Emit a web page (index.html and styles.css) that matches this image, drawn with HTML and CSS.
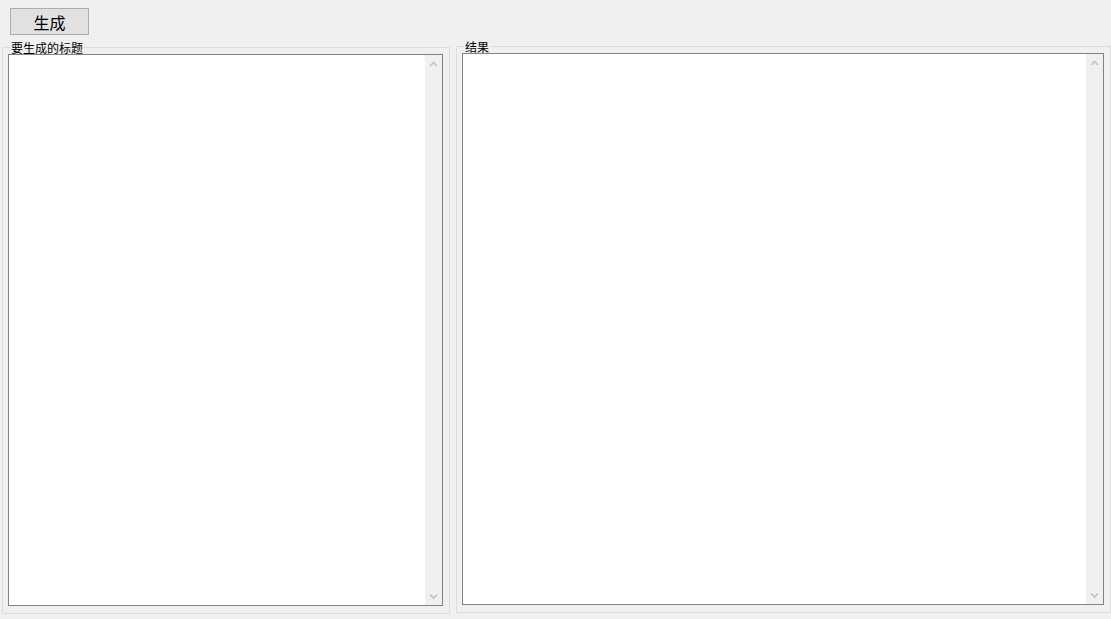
FILE: index.html
```html
<!DOCTYPE html>
<html lang="zh-CN">

<head>
    <meta charset="UTF-8">
    <title>生成</title>
    <link rel="stylesheet" href="styles.css">
</head>

<body>
    <div class="toolbar">
        <button class="btn">生成</button>
    </div>
    <div class="panels">
        <div class="group group-left">
            <span class="group-title">要生成的标题</span>
            <div class="text-box">
                <textarea class="text-input"></textarea>
                <div class="scrollbar">
                    <svg class="arrow" width="17" height="17" viewBox="0 0 17 17"><path d="M5 11 L8.5 7.5 L12 11" fill="none" stroke="#c2c2c2" stroke-width="1.6"/></svg>
                    <svg class="arrow" width="17" height="17" viewBox="0 0 17 17"><path d="M5 6.5 L8.5 10 L12 6.5" fill="none" stroke="#c2c2c2" stroke-width="1.6"/></svg>
                </div>
            </div>
        </div>
        <div class="group group-right">
            <span class="group-title">结果</span>
            <div class="text-box">
                <textarea class="text-input" readonly></textarea>
                <div class="scrollbar">
                    <svg class="arrow" width="17" height="17" viewBox="0 0 17 17"><path d="M5 11 L8.5 7.5 L12 11" fill="none" stroke="#c2c2c2" stroke-width="1.6"/></svg>
                    <svg class="arrow" width="17" height="17" viewBox="0 0 17 17"><path d="M5 6.5 L8.5 10 L12 6.5" fill="none" stroke="#c2c2c2" stroke-width="1.6"/></svg>
                </div>
            </div>
        </div>
    </div>
</body>

</html>
```

FILE: styles.css
```css
body {
    font-family: "Noto Sans CJK SC", "Noto Sans", sans-serif;
    margin: 0;
    padding: 0;
    width: 1111px;
    height: 619px;
    overflow: hidden;
    background-color: #f0f0f0;
    color: #000;
}

.toolbar {
    padding: 8px 0 0 10px;
    height: 27px;
}

.btn {
    width: 79px;
    height: 27px;
    background-color: #e1e1e1;
    border: 1px solid #adadad;
    font-family: inherit;
    font-size: 16px;
    line-height: 1;
    padding: 0;
    color: #000;
}

.panels {
    display: flex;
    gap: 6px;
    margin-top: 12px;
    padding-left: 2px;
}

.group {
    display: flex;
    flex-direction: column;
    border: 1px solid #dcdcdc;
    padding: 0 6px 7px 5px;
    height: 567px;
    box-sizing: border-box;
}

.group-left {
    width: 448px;
}

.group-right {
    flex: 1;
    margin-top: -1px;
}

.group-title {
    align-self: flex-start;
    margin: -7px 0 0 2px;
    padding: 0 1px;
    font-size: 12px;
    line-height: 13px;
    background-color: #f0f0f0;
}

.text-box {
    flex: 1;
    display: flex;
    border: 1px solid #828282;
    background: white;
}

.text-input {
    flex: 1;
    border: none;
    resize: none;
    outline: none;
    margin: 0;
    padding: 2px 3px;
    font-family: inherit;
    font-size: 12px;
    background: white;
}

.scrollbar {
    width: 17px;
    display: flex;
    flex-direction: column;
    justify-content: space-between;
    background-color: #f0f0f0;
}

.arrow {
    display: block;
}
```
